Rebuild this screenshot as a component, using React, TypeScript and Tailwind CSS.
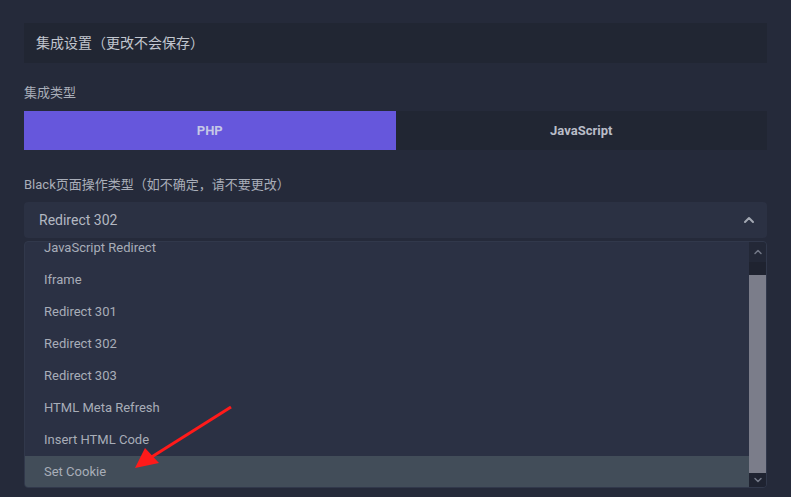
import { ChevronUp, ChevronDown } from "lucide-react";

const items = [
  "JavaScript Redirect",
  "Iframe",
  "Redirect 301",
  "Redirect 302",
  "Redirect 303",
  "HTML Meta Refresh",
  "Insert HTML Code",
  "Set Cookie",
];

export default function App() {
  return (
    <div
      className="relative w-[791px] h-[497px] overflow-hidden bg-[#252a3a] px-6 pt-[23px]"
      style={{ fontFamily: 'Roboto, "Noto Sans CJK SC", sans-serif' }}
    >
      {/* Section header */}
      <div className="h-10 flex items-center pl-3 bg-[#212633] text-[14px] text-[#c2c6cf]">
        集成设置（更改不会保存）
      </div>

      {/* Integration type */}
      <div className="mt-[21px] h-[18px] leading-[18px] text-[13px] text-[#a9aeb9]">集成类型</div>
      <div className="mt-[9px] flex h-[39px] text-[13px] font-bold">
        <div className="flex-1 flex items-center justify-center bg-[#6657dc] text-[#c5c8e6]">PHP</div>
        <div className="flex-1 flex items-center justify-center bg-[#212633] text-[#b9bdc8]">JavaScript</div>
      </div>

      {/* Black page action type */}
      <div className="mt-[26px] h-[18px] leading-[18px] text-[13px] text-[#a9aeb9]">
        Black页面操作类型（如不确定，请不要更改）
      </div>
      <div className="mt-[8px] h-9 flex items-center justify-between rounded bg-[#2b3143] pl-[15px] pr-[10px] text-[14px] text-[#b3b8c2]">
        <span>Redirect 302</span>
        <ChevronUp className="w-4 h-4 text-[#a3a8b3]" strokeWidth={3} />
      </div>

      {/* Open dropdown list */}
      <div className="mt-[3px] h-[247px] flex rounded-sm border border-[#31384b] bg-[#2b3144] overflow-hidden">
        <div className="flex-1 overflow-hidden">
          <div className="-mt-[10px]">
            {items.map((item) => (
              <div
                key={item}
                className={`h-8 flex items-center pl-[19px] text-[13px] text-[#a8adb8] ${
                  item === "Set Cookie" ? "bg-[#424d59]" : ""
                }`}
              >
                {item}
              </div>
            ))}
          </div>
        </div>
        <div className="w-[17px] flex flex-col bg-[#232837]">
          <div className="h-[20px] flex items-center justify-center">
            <ChevronUp className="w-3 h-3 text-[#737887]" strokeWidth={3} />
          </div>
          <div className="h-[13px] bg-[#1f2330]" />
          <div className="flex-1 bg-[#7b7d8a]" />
          <div className="h-[14px] flex items-center justify-center bg-[#1f2331]">
            <ChevronDown className="w-3 h-3 text-[#737887]" strokeWidth={3} />
          </div>
        </div>
      </div>

      {/* Red annotation arrow */}
      <svg className="absolute left-0 top-0 pointer-events-none" width="791" height="497">
        <line x1="231" y1="407" x2="150" y2="458" stroke="#ff1a1a" strokeWidth="3" />
        <polygon points="135,468 145,448 159,463" fill="#ff1a1a" />
      </svg>
    </div>
  );
}
